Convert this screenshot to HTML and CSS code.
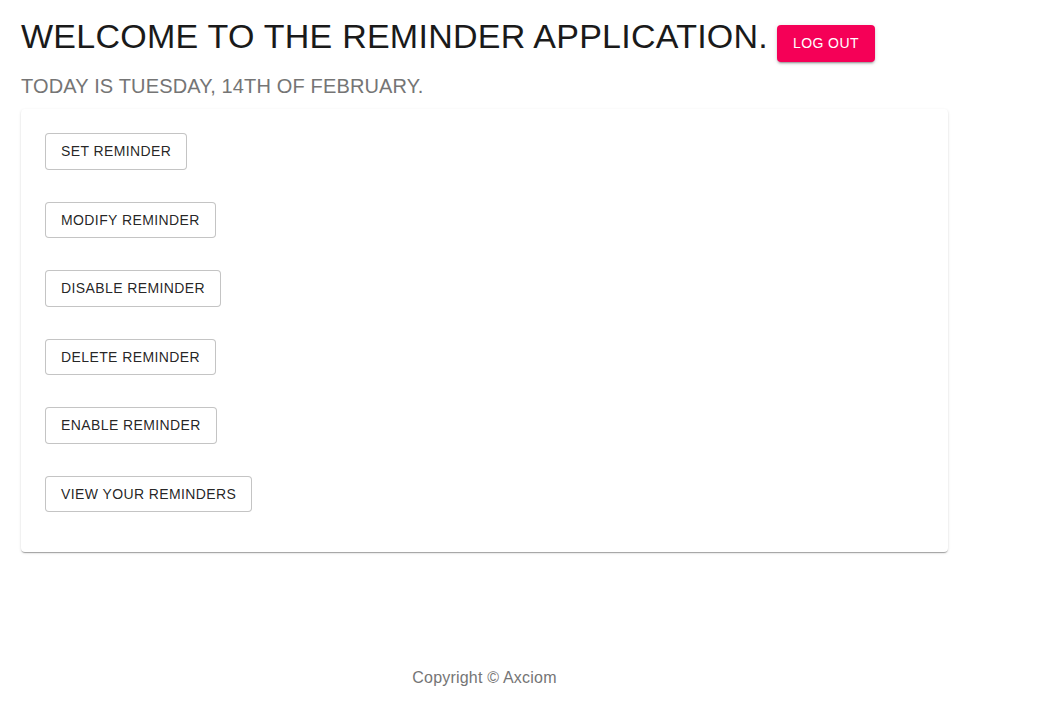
FILE: index.html
```html
<!DOCTYPE html>
<html>
<head>
<meta charset="utf-8">
<link rel="stylesheet" href="styles.css">
</head>
<body>
<div class="page">
  <h1 class="title"><span>WELCOME TO THE REMINDER APPLICATION.</span><button class="btn-logout">LOG OUT</button></h1>
  <h2 class="subtitle">TODAY IS TUESDAY, 14TH OF FEBRUARY.</h2>
  <div class="card">
    <button class="btn-outline">SET REMINDER</button>
    <button class="btn-outline">MODIFY REMINDER</button>
    <button class="btn-outline">DISABLE REMINDER</button>
    <button class="btn-outline">DELETE REMINDER</button>
    <button class="btn-outline">ENABLE REMINDER</button>
    <button class="btn-outline">VIEW YOUR REMINDERS</button>
  </div>
  <footer class="footer">Copyright © Axciom</footer>
</div>
</body>
</html>
```
FILE: styles.css
```css
html, body {
  margin: 0;
  padding: 0;
  background: #fff;
}
body {
  font-family: "Liberation Sans", Arial, sans-serif;
  color: rgba(0,0,0,0.87);
}
.page {
  width: 927px;
  padding: 16px 0 0 21px;
}
.title {
  display: flex;
  align-items: baseline;
  gap: 9px;
  margin: 0;
  font-size: 34px;
  font-weight: 400;
  letter-spacing: 0.25px;
  line-height: 40px;
  color: #1a1a1a;
}
.btn-logout {
  font-family: "Liberation Sans", Arial, sans-serif;
  font-size: 14px;
  line-height: 25px;
  letter-spacing: 0.4px;
  white-space: nowrap;
  color: #fff;
  background: #f50057;
  border: 0;
  border-radius: 4px;
  padding: 6px 16px;
  box-shadow: 0 3px 1px -2px rgba(0,0,0,0.2), 0 2px 2px 0 rgba(0,0,0,0.14), 0 1px 5px 0 rgba(0,0,0,0.12);
}
.subtitle {
  margin: 12px 0 11px;
  font-size: 20px;
  font-weight: 400;
  letter-spacing: 0.15px;
  line-height: 24px;
  color: #757575;
}
.card {
  display: flex;
  flex-direction: column;
  align-items: flex-start;
  gap: 32px;
  padding: 24px 24px 40px;
  border-radius: 4px;
  background: #fff;
  box-shadow: 0 2px 1px -1px rgba(0,0,0,0.2), 0 1px 1px 0 rgba(0,0,0,0.14), 0 1px 3px 0 rgba(0,0,0,0.12);
}
.btn-outline {
  font-family: "Liberation Sans", Arial, sans-serif;
  font-size: 14px;
  line-height: 24.5px;
  letter-spacing: 0.4px;
  color: rgba(0,0,0,0.87);
  background: #fff;
  border: 1px solid rgba(0,0,0,0.23);
  border-radius: 4px;
  padding: 5px 15px;
  text-transform: uppercase;
}
.footer {
  margin-top: 116px;
  text-align: center;
  font-size: 16px;
  letter-spacing: 0.2px;
  line-height: 20px;
  color: #757575;
}
```
